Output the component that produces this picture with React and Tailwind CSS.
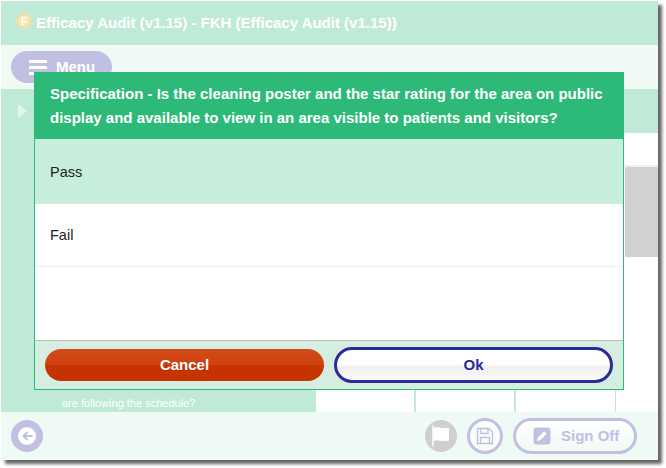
const font = { fontFamily: '"Liberation Sans", Arial, sans-serif' };

function Bars() {
  return (
    <span className="flex flex-col gap-[3px] w-[18px]">
      <span className="h-[3px] bg-white" />
      <span className="h-[3px] bg-white" />
      <span className="h-[3px] bg-white" />
    </span>
  );
}

export default function App() {
  return (
    <div className="relative w-[666px] h-[468px] bg-white overflow-hidden" style={font}>
      <div className="absolute left-px top-px w-[657px] h-[459px] flex flex-col bg-white shadow-[4px_4px_3px_rgba(0,0,0,0.6)]">
        <div className="h-[44px] shrink-0 bg-[#bfead8] flex items-center pl-[15px] gap-[3px]">
          <svg width="18" height="18" viewBox="0 0 18 18" className="-mt-[5px] -ml-px">
            <circle cx="9" cy="9" r="8" fill="#f3e6b0" opacity="0.7" />
            <circle cx="9" cy="9" r="6.5" fill="#f6e7b4" stroke="#ecd98f" strokeWidth="1.6" strokeDasharray="2 1.2" />
            <text x="9" y="13" textAnchor="middle" fontSize="11" fontWeight="700" fill="#fff" fontFamily="Liberation Sans">F</text>
          </svg>
          <span className="text-[15px] font-bold text-white">Efficacy Audit (v1.15) - FKH (Efficacy Audit (v1.15))</span>
        </div>
        <div className="h-[44px] shrink-0 bg-[#f0faf5] flex items-center pl-[10px]">
          <div className="w-[101px] h-[32px] rounded-[16px] bg-[#c1c0e3] flex items-center pl-[18px] gap-[9px]">
            <Bars />
            <span className="text-[15px] font-bold text-white">Menu</span>
          </div>
        </div>
        <div className="flex-1 flex flex-col min-h-0">
          <div className="h-[44px] shrink-0 bg-[#bfead8] flex items-center pl-[17px]">
            <span className="w-0 h-0 border-y-[7px] border-y-transparent border-l-[9px] border-l-[#e3f5ed]" />
          </div>
          <div className="flex-1 flex min-h-0">
            <div className="w-[315px] bg-[#bfead8] flex flex-col justify-end pl-[61px] pb-[2px]">
              <span className="text-[11px] leading-[14px] text-white">are following the schedule?</span>
            </div>
            <div className="flex-1 flex flex-col">
              <div className="h-[34px] border-b-2 border-[#eeeeee]" />
              <div className="flex-1 flex justify-end">
                <div className="w-[33px] h-[90px] bg-[#d1d1d1]" />
              </div>
              <div className="h-[22px] flex">
                <div className="w-[100px] border-r-2 border-[#bfead8]" />
                <div className="w-[100px] border-r-2 border-[#bfead8]" />
                <div className="w-[100px] border-r border-[#bfead8]" />
              </div>
            </div>
          </div>
        </div>
        <div className="h-[48px] shrink-0 bg-[#f0faf5] flex items-center pl-[10px] pr-[21px]">
          <div className="w-[32px] h-[32px] rounded-full bg-[#c1c0e3] flex items-center justify-center">
            <svg width="20" height="20" viewBox="0 0 20 20">
              <circle cx="10" cy="10" r="9" fill="#fff" />
              <path d="M15.5 10H6.5M10.5 6l-4 4 4 4" fill="none" stroke="#c1c0e3" strokeWidth="2" />
            </svg>
          </div>
          <div className="flex-1" />
          <div className="w-[32px] h-[32px] rounded-full bg-[#cfcfcf] flex items-center justify-center">
            <svg width="22" height="22" viewBox="0 0 22 22">
              <path d="M3 0.5v21" stroke="#fff" strokeWidth="1.5" />
              <path d="M3.5 3c5-2.5 8 1.5 15.5-.5v13c-6 2-10-2-15.5 .5z" fill="#fff" />
            </svg>
          </div>
          <div className="w-[36px] h-[36px] ml-[10px] rounded-full border-[3px] border-[#c1c0e3] bg-white/60 flex items-center justify-center">
            <svg width="18" height="18" viewBox="0 0 18 18" fill="none" stroke="#c1c0e3" strokeWidth="1.4">
              <path d="M1.5 1.5h11.5l3.5 3.5v11.5h-15z" />
              <path d="M5 1.5v5h7v-5M4.5 16.5v-6h9v6" />
            </svg>
          </div>
          <div className="w-[124px] h-[36px] ml-[10px] rounded-[18px] border-[3px] border-[#c1c0e3] bg-[linear-gradient(#ffffff,#f0faf5)] flex items-center pl-[17px] gap-[10px]">
            <svg width="18" height="18" viewBox="0 0 18 18">
              <rect x="0.5" y="0.5" width="17" height="17" rx="3" fill="#c1c0e3" />
              <path d="M4 14l.8-3.2 6.5-6.5 2.4 2.4-6.5 6.5z" fill="#fff" />
            </svg>
            <span className="text-[15px] font-bold text-[#c1c0e3]">Sign Off</span>
          </div>
        </div>
      </div>

      <div className="absolute left-[34px] top-[72px] w-[590px] h-[318px] flex flex-col border border-[#2dba78] border-t-0 bg-white">
        <div className="-mx-px h-[67px] shrink-0 bg-[#2dba78] pl-[16px] pt-[10px] text-[15px] leading-[24px] font-bold text-white">
          <div>Specification - Is the cleaning poster and the star rating for the area on public</div>
          <div>display and available to view in an area visible to patients and visitors?</div>
        </div>
        <div className="h-[65px] shrink-0 bg-[#c7eedc] flex items-center pl-[15px] pt-[2px] text-[14.5px] text-[#222222]">Pass</div>
        <div className="h-[63px] shrink-0 border-b border-[#eeeeee] flex items-center pl-[15px] pt-[2px] text-[14.5px] text-[#222222]">Fail</div>
        <div className="flex-1" />
        <div className="h-[49px] shrink-0 bg-[#d5eee0] border-t border-[#bdbdbd] flex items-center justify-between pl-[10px] pr-[10px]">
          <div className="w-[279px] h-[32px] rounded-[16px] flex items-center justify-center text-[15px] font-bold text-white bg-[linear-gradient(#d24a18_0%,#cf4210_50%,#c63200_52%,#c63200_100%)]">Cancel</div>
          <div className="w-[279px] h-[36px] rounded-[18px] border-[3px] border-[#2a2a9a] flex items-center justify-center text-[15px] font-bold text-[#2a2a9a] bg-[linear-gradient(#ffffff_0%,#ffffff_50%,#f0f0f0_55%,#fafafa_100%)]">Ok</div>
        </div>
      </div>
    </div>
  );
}
